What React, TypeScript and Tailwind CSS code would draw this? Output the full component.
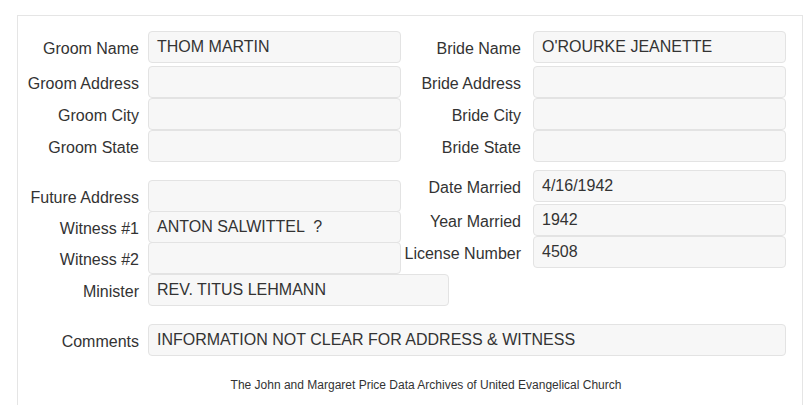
import React from 'react';

type Field = { label: string; value?: string; mt: string; w?: string };

const groomFields: Field[] = [
  { label: 'Groom Name', value: 'THOM MARTIN', mt: 'mt-0' },
  { label: 'Groom Address', mt: 'mt-[3px]' },
  { label: 'Groom City', mt: 'mt-0' },
  { label: 'Groom State', mt: 'mt-0' },
];

const brideFields: Field[] = [
  { label: 'Bride Name', value: "O'ROURKE JEANETTE", mt: 'mt-0' },
  { label: 'Bride Address', mt: 'mt-[3px]' },
  { label: 'Bride City', mt: 'mt-0' },
  { label: 'Bride State', mt: 'mt-0' },
];

const extraLeft: Field[] = [
  { label: 'Future Address', mt: 'mt-0' },
  { label: 'Witness #1', value: 'ANTON SALWITTEL  ?', mt: 'mt-[-1px]' },
  { label: 'Witness #2', mt: 'mt-[-1px]' },
  { label: 'Minister', value: 'REV. TITUS LEHMANN', mt: 'mt-0', w: 'w-[301px]' },
];

const extraRight: Field[] = [
  { label: 'Date Married', value: '4/16/1942', mt: 'mt-0' },
  { label: 'Year Married', value: '1942', mt: 'mt-[2px]' },
  { label: 'License Number', value: '4508', mt: 'mt-0' },
];

const Box: React.FC<{ value?: string; className: string }> = ({ value, className }) => (
  <div
    className={`h-[32px] shrink-0 rounded-[4px] border border-[#e3e3e3] bg-[#f7f7f7] px-[8px] flex items-center text-[16px] text-[#333] whitespace-pre ${className}`}
  >
    {value}
  </div>
);

const Row: React.FC<{ field: Field; labelW: string; gap: string; boxW: string }> = ({ field, labelW, gap, boxW }) => (
  <div className={`flex items-center ${gap} ${field.mt}`}>
    <label className={`${labelW} shrink-0 text-right text-[16px] text-[#333] pt-[3px] whitespace-nowrap`}>
      {field.label}
    </label>
    <Box value={field.value} className={field.w ?? boxW} />
  </div>
);

const App: React.FC = () => {
  return (
    <div className="min-h-screen bg-white" style={{ fontFamily: '"Liberation Sans", Arial, sans-serif' }}>
      <div className="ml-[17px] mt-[15px] w-[786px] border border-b-0 border-[#e5e5e5] pt-[15px] pb-[40px]">
        {/* Names and addresses */}
        <div className="flex">
          <div className="w-[383px] flex flex-col">
            {groomFields.map((f) => (
              <Row key={f.label} field={f} labelW="w-[121px]" gap="gap-[9px]" boxW="w-[253px]" />
            ))}
          </div>
          <div className="flex flex-col">
            {brideFields.map((f) => (
              <Row key={f.label} field={f} labelW="w-[120px]" gap="gap-[12px]" boxW="w-[253px]" />
            ))}
          </div>
        </div>

        {/* Marriage details */}
        <div className="flex mt-[8px]">
          <div className="w-[383px] flex flex-col pt-[10px]">
            {extraLeft.map((f) => (
              <Row key={f.label} field={f} labelW="w-[121px]" gap="gap-[9px]" boxW="w-[253px]" />
            ))}
          </div>
          <div className="flex flex-col">
            {extraRight.map((f) => (
              <Row key={f.label} field={f} labelW="w-[120px]" gap="gap-[12px]" boxW="w-[253px]" />
            ))}
          </div>
        </div>

        {/* Comments */}
        <div className="mt-[18px]">
          <Row
            field={{ label: 'Comments', value: 'INFORMATION NOT CLEAR FOR ADDRESS & WITNESS', mt: 'mt-0' }}
            labelW="w-[121px]"
            gap="gap-[9px]"
            boxW="w-[638px]"
          />
        </div>

        <p className="mt-[20px] pl-[32px] text-center text-[12px] text-[#333]">
          The John and Margaret Price Data Archives of United Evangelical Church
        </p>
      </div>
    </div>
  );
};

export default App;
